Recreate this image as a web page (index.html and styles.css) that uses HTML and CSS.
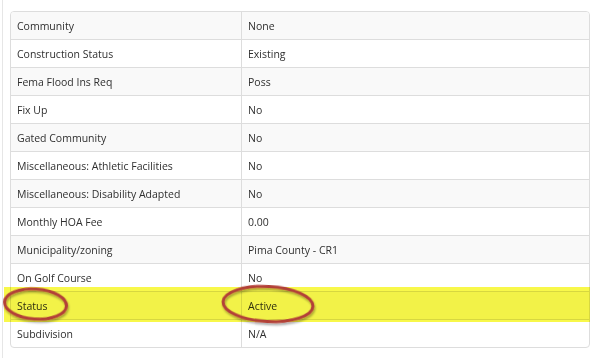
FILE: index.html
```html
<!DOCTYPE html>
<html>
<head>
<meta charset="utf-8">
<link rel="stylesheet" href="styles.css">
</head>
<body>
<div class="page">
  <table class="details">
    <tr><td class="k">Community</td><td class="v">None</td></tr>
    <tr><td class="k">Construction Status</td><td class="v">Existing</td></tr>
    <tr><td class="k">Fema Flood Ins Req</td><td class="v">Poss</td></tr>
    <tr><td class="k">Fix Up</td><td class="v">No</td></tr>
    <tr><td class="k">Gated Community</td><td class="v">No</td></tr>
    <tr><td class="k">Miscellaneous: Athletic Facilities</td><td class="v">No</td></tr>
    <tr><td class="k">Miscellaneous: Disability Adapted</td><td class="v">No</td></tr>
    <tr><td class="k">Monthly HOA Fee</td><td class="v">0.00</td></tr>
    <tr><td class="k">Municipality/zoning</td><td class="v">Pima County - CR1</td></tr>
    <tr><td class="k">On Golf Course</td><td class="v">No</td></tr>
    <tr><td class="k">Status</td><td class="v">Active</td></tr>
    <tr><td class="k">Subdivision</td><td class="v">N/A</td></tr>
  </table>
  <div class="highlight"></div>
  <svg class="marks" width="600" height="358" viewBox="0 0 600 358">
    <defs>
      <filter id="sh" x="-20%" y="-20%" width="140%" height="160%">
        <feDropShadow dx="1" dy="2" stdDeviation="1.2" flood-color="#000" flood-opacity="0.35"/>
      </filter>
    </defs>
    <ellipse cx="35.5" cy="304" rx="31" ry="15" fill="none" stroke="#b23f37" stroke-width="3" transform="rotate(4 35.5 304)" filter="url(#sh)"/>
    <ellipse cx="268" cy="304" rx="45" ry="17.5" fill="none" stroke="#b23f37" stroke-width="3" transform="rotate(3 268 304)" filter="url(#sh)"/>
  </svg>
</div>
</body>
</html>
```
FILE: styles.css
```css
html, body {
  margin: 0;
  padding: 0;
  background: #ffffff;
}
.page {
  position: relative;
  width: 600px;
  height: 358px;
  box-sizing: border-box;
  padding: 11px 0 0 10px;
  font-family: "Open Sans", "Noto Sans", "DejaVu Sans", sans-serif;
  font-size: 10.5px;
  color: #2f2f2f;
}
.page::before {
  content: "";
  position: absolute;
  left: 2px;
  top: 0;
  bottom: 0;
  width: 1px;
  background: #e6e6e6;
}
.details {
  width: 580px;
  border-collapse: separate;
  border-spacing: 0;
  border: 1px solid #dddddd;
  border-radius: 4px;
  overflow: hidden;
}
.details td {
  height: 28px;
  padding: 0 6px;
  box-sizing: border-box;
  border-top: 1px solid #dddddd;
  vertical-align: middle;
  line-height: 14px;
}
.details tr:first-child td {
  border-top: none;
  height: 27px;
}
.details tr:nth-child(odd) td {
  background: #f9f9f9;
}
.details .k {
  width: 231px;
  border-right: 1px solid #dddddd;
}
.details .v {
  padding-left: 6px;
}
.highlight {
  position: absolute;
  left: 4px;
  top: 287px;
  width: 586px;
  height: 35px;
  background: #f8f84a;
  mix-blend-mode: multiply;
}
.marks {
  position: absolute;
  left: 0;
  top: 0;
  pointer-events: none;
}
```
